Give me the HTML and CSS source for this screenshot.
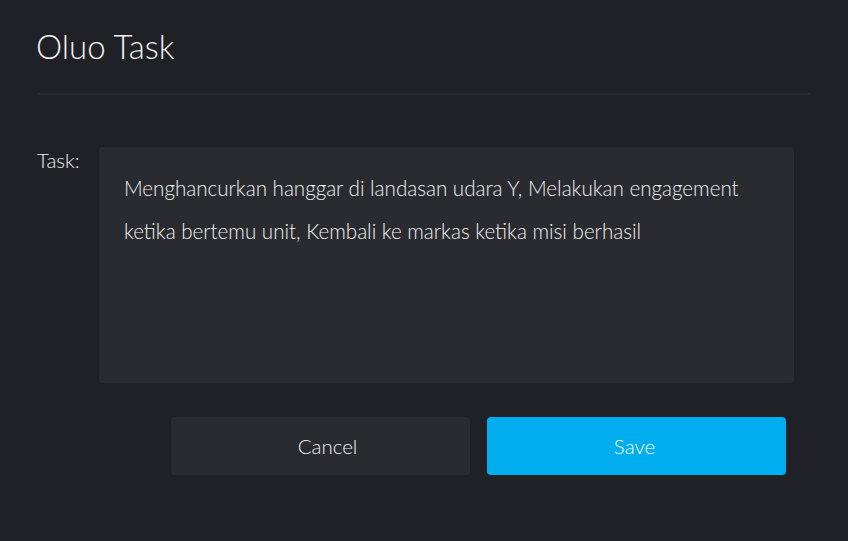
FILE: index.html
```html
<!DOCTYPE html>
<html>
<head>
<meta charset="utf-8">
<link rel="stylesheet" href="styles.css">
</head>
<body>
<div class="dialog">
  <header class="header">
    <h1 class="title">Oluo Task</h1>
  </header>
  <div class="divider"></div>
  <div class="form-row">
    <label class="label">Task:</label>
    <div class="textarea">Menghancurkan hanggar di landasan udara Y, Melakukan engagement ketika bertemu unit, Kembali ke markas ketika misi berhasil</div>
  </div>
  <div class="actions">
    <button class="btn btn-cancel">Cancel</button>
    <button class="btn btn-save">Save</button>
  </div>
</div>
</body>
</html>
```
FILE: styles.css
```css
html, body {
  margin: 0;
  padding: 0;
  background: #202126;
  height: 100%;
}
body {
  font-family: Lato, "Noto Sans", sans-serif;
  color: #e6e6e8;
}
.dialog {
  padding: 0 38px 0 37px;
}
.header {
  padding-top: 26px;
  height: 66px;
  box-sizing: border-box;
}
.title {
  margin: 0 0 0 -1px;
  font-weight: 300;
  font-size: 33px;
  line-height: 40px;
  color: #f2f2f4;
  letter-spacing: 0;
}
.divider {
  height: 2px;
  background: #2a2b30;
  margin: 27px 0 0 1px;
}
.form-row {
  display: flex;
  align-items: flex-start;
  margin-top: 52px;
  padding-right: 16px;
}
.label {
  width: 62px;
  flex: none;
  font-size: 20.5px;
  font-weight: 300;
  line-height: 24px;
  color: #eeeef0;
  padding-top: 1px;
}
.textarea {
  flex: 1;
  height: 236px;
  box-sizing: border-box;
  background: #2a2b30;
  border-radius: 4px;
  padding: 20px 20px 20px 25px;
  font-size: 20.6px;
  font-weight: 300;
  line-height: 43px;
  color: #f0f0f2;
}
.actions {
  display: flex;
  justify-content: flex-end;
  gap: 17px;
  margin-top: 34px;
  padding-right: 24px;
}
.btn {
  width: 299px;
  height: 58px;
  border: none;
  border-radius: 4px;
  font-family: Lato, "Noto Sans", sans-serif;
  font-size: 20.5px;
  font-weight: 300;
  cursor: pointer;
}
.btn-cancel {
  background: #2a2b30;
  color: #f0f0f2;
  padding: 0 0 0 14px;
}
.btn-save {
  background: #00aeef;
  color: #ffffff;
  padding: 0 4px 0 0;
}
```
